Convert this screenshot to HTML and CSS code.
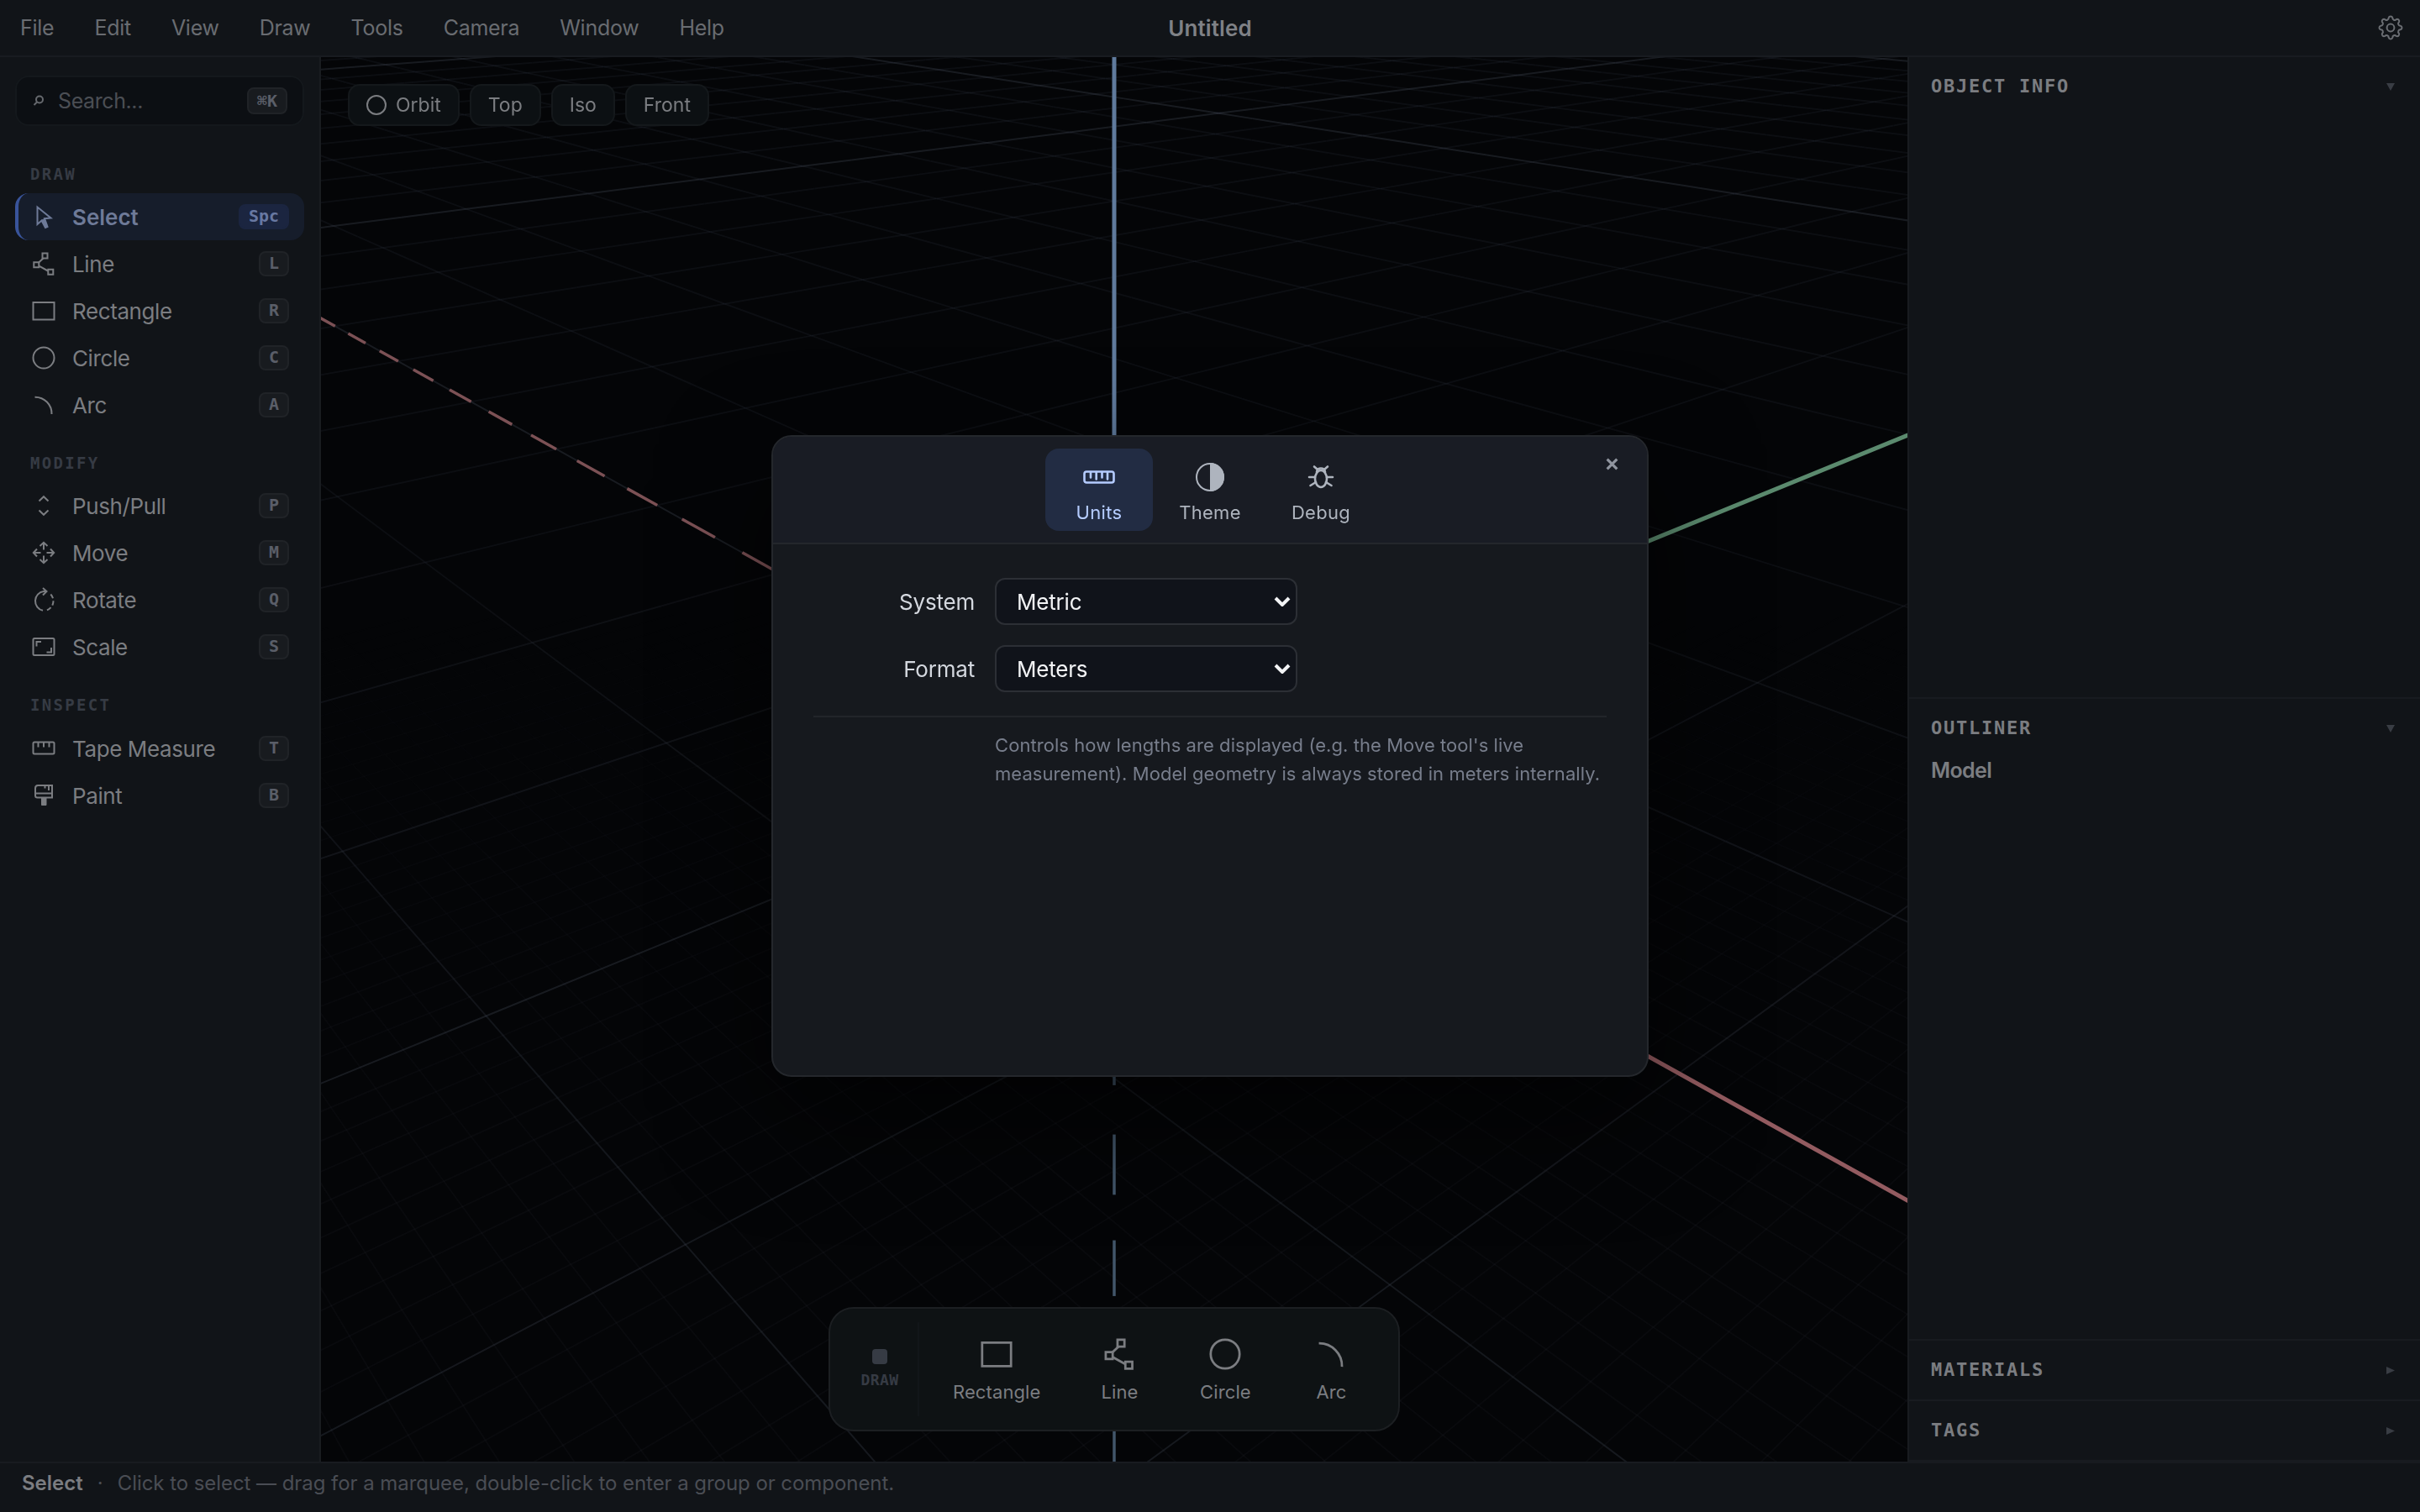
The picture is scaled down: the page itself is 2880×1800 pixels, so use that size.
FILE: index.html
```html
<!DOCTYPE html>
<html lang="en">
  <head>
    <meta charset="UTF-8" />
    <meta name="viewport" content="width=device-width, initial-scale=1.0" />
    <title>Untitled</title>
    <link rel="stylesheet" href="styles.css" />
  </head>
  <body>
    <!-- Shared icon shapes -->
    <svg class="sprite">
      <symbol id="i-line" viewBox="0 0 32 32">
        <path d="M15.5 9.5L9.5 15M10.5 18.7L21 24.5" />
        <path d="M14.5 3.5h6v6h-6zM4.3 14.3h6v6h-6zM21.3 22.7h6v6h-6z" />
      </symbol>
      <symbol id="i-rect" viewBox="0 0 32 32"><path d="M3.5 6h25v20.500h-25z" /></symbol>
      <symbol id="i-circle" viewBox="0 0 32 32"><circle cx="16" cy="16" r="12.500" /></symbol>
      <symbol id="i-arc" viewBox="0 0 32 32"><path d="M5.500 6.700A19.700 19.700 0 0 1 25.500 27" /></symbol>
    </svg>

    <div class="app">
      <header class="menubar">
        <nav class="menus">
          <span class="menu">File</span>
          <span class="menu">Edit</span>
          <span class="menu">View</span>
          <span class="menu">Draw</span>
          <span class="menu">Tools</span>
          <span class="menu">Camera</span>
          <span class="menu">Window</span>
          <span class="menu">Help</span>
        </nav>
        <div class="doc-title">Untitled</div>
        <div class="menubar-end">
          <svg class="gear" viewBox="-16 -16 32 32">
            <path d="M11.77-2.34A2.45 2.45 0 0 1 11.77 2.34A2.45 2.45 0 0 0 9.98 6.67A2.45 2.45 0 0 1 6.67 9.98A2.45 2.45 0 0 0 2.34 11.77A2.45 2.45 0 0 1-2.34 11.77A2.45 2.45 0 0 0-6.67 9.98A2.45 2.45 0 0 1-9.98 6.67A2.45 2.45 0 0 0-11.77 2.34A2.45 2.45 0 0 1-11.77-2.34A2.45 2.45 0 0 0-9.98-6.67A2.45 2.45 0 0 1-6.67-9.98A2.45 2.45 0 0 0-2.34-11.77A2.45 2.45 0 0 1 2.34-11.77A2.45 2.45 0 0 0 6.67-9.98A2.45 2.45 0 0 1 9.98-6.67A2.45 2.45 0 0 0 11.77-2.34Z" />
            <circle r="4.400" />
          </svg>
        </div>
      </header>

      <aside class="sidebar">
        <div class="search">
          <svg class="search-icon" viewBox="0 0 14 14"><circle cx="8" cy="5.500" r="4" /><path d="M5 8.500L1.500 12" /></svg>
          <span class="search-text">Search...</span>
          <kbd>⌘K</kbd>
        </div>

        <h2 class="group first">DRAW</h2>
        <div class="tool active">
          <svg class="icon" viewBox="0 0 32 32"><path d="M8.500 4.500V25L13.500 20.500L18 29L20.500 28L17 18.200L24.500 17.500Z" /><path class="solid" d="M14 20l4 9 2.500-1-3.500-9.500z" /></svg>
          <span>Select</span><kbd>Spc</kbd>
        </div>
        <div class="tool"><svg class="icon"><use href="#i-line" /></svg><span>Line</span><kbd>L</kbd></div>
        <div class="tool"><svg class="icon"><use href="#i-rect" /></svg><span>Rectangle</span><kbd>R</kbd></div>
        <div class="tool"><svg class="icon"><use href="#i-circle" /></svg><span>Circle</span><kbd>C</kbd></div>
        <div class="tool"><svg class="icon"><use href="#i-arc" /></svg><span>Arc</span><kbd>A</kbd></div>

        <h2 class="group">MODIFY</h2>
        <div class="tool">
          <svg class="icon" viewBox="0 0 32 32"><path d="M10.500 10.500L16 5.200l5.500 5.300M10.500 21.500l5.500 5.300 5.500-5.300" /></svg>
          <span>Push/Pull</span><kbd>P</kbd>
        </div>
        <div class="tool">
          <svg class="icon" viewBox="0 0 32 32"><path d="M16 12.500V4M11.500 8L16 3.800 20.500 8M16 19.500V28M11.500 24l4.500 4.200 4.500-4.200M12.500 16H4M8 11.500L3.800 16 8 20.500M19.500 16H28M24 11.500l4.200 4.500-4.200 4.500" /></svg>
          <span>Move</span><kbd>M</kbd>
        </div>
        <div class="tool">
          <svg class="icon" viewBox="0 0 32 32"><path d="M15 28.800A11.600 11.600 0 0 1 16 6h3.500M15 2l4.500 4-4.500 4.500" /><path d="M24.300 9.500a11.600 11.600 0 0 1-6 19.300" stroke-dasharray="5.500 3" /></svg>
          <span>Rotate</span><kbd>Q</kbd>
        </div>
        <div class="tool">
          <svg class="icon" viewBox="0 0 32 32"><rect x="3.500" y="6" width="25" height="20" rx="1.500" /><path d="M7.500 15.500v-5.500h5.500M19.500 22.500h5.500V17" /></svg>
          <span>Scale</span><kbd>S</kbd>
        </div>

        <h2 class="group">INSPECT</h2>
        <div class="tool">
          <svg class="icon" viewBox="0 0 32 32"><rect x="3.500" y="8.500" width="25" height="14" rx="1.500" /><path d="M9.500 8.500v6M16 8.500v6M22.500 8.500v6" /></svg>
          <span>Tape Measure</span><kbd>T</kbd>
        </div>
        <div class="tool">
          <svg class="icon" viewBox="0 0 32 32"><path d="M9 4h17v14.500H8.500q-2.500 0-2.500-2.500V7.500Q6 4 9 4zM6 13.500h20M17.500 4v3.500M22 4v6" /><path class="solid" d="M13.500 19h5.500v8.500h-5.500z" /></svg>
          <span>Paint</span><kbd>B</kbd>
        </div>
      </aside>

      <main class="viewport">
        <canvas id="scene" width="1888" height="1672"></canvas>
        <div class="views">
          <span class="view"><svg class="view-icon" viewBox="0 0 24 24"><circle cx="12" cy="12" r="11" /></svg>Orbit</span>
          <span class="view">Top</span>
          <span class="view">Iso</span>
          <span class="view">Front</span>
        </div>
        <div class="dock">
          <div class="dock-label"><i></i>DRAW</div>
          <div class="dock-item"><svg class="dock-icon"><use href="#i-rect" /></svg>Rectangle</div>
          <div class="dock-item"><svg class="dock-icon"><use href="#i-line" /></svg>Line</div>
          <div class="dock-item"><svg class="dock-icon"><use href="#i-circle" /></svg>Circle</div>
          <div class="dock-item"><svg class="dock-icon"><use href="#i-arc" /></svg>Arc</div>
        </div>
      </main>

      <aside class="inspector">
        <section class="panel open">
          <h3>OBJECT INFO<i class="caret down"></i></h3>
        </section>
        <section class="panel open">
          <h3>OUTLINER<i class="caret down"></i></h3>
          <div class="node">Model</div>
        </section>
        <section class="panel">
          <h3>MATERIALS<i class="caret"></i></h3>
        </section>
        <section class="panel">
          <h3>TAGS<i class="caret"></i></h3>
        </section>
      </aside>

      <footer class="status">
        <b>Select</b><span class="dot">·</span>
        <span class="hint">Click to select — drag for a marquee, double-click to enter a group or component.</span>
      </footer>
    </div>

    <!-- Settings dialog -->
    <div class="backdrop">
      <div class="modal">
        <div class="tabs">
          <div class="tab active">
            <svg viewBox="0 0 40 40"><rect x="2.500" y="13.500" width="35" height="13" rx="2.500" /><path d="M10 14v6.500M16.700 14v8.500M23.500 14v6.500M30 14v8.500" /></svg>
            Units
          </div>
          <div class="tab">
            <svg viewBox="0 0 40 40"><circle cx="20" cy="20" r="16" stroke-width="2" /><path class="fill" d="M20 3a17 17 0 0 1 0 34z" /></svg>
            Theme
          </div>
          <div class="tab">
            <svg viewBox="0 0 40 40"><ellipse cx="20" cy="22" rx="7" ry="10" /><path d="M15 14c0-6 10-6 10 0M15.500 10.500L12 7.500M24.500 10.500L28 7.500M13 20H6M27 20h7M14 26l-6.500 4M26 26l6.500 4" /></svg>
            Debug
          </div>
          <span class="close"><svg viewBox="0 0 16 16"><path d="M2.500 2.500l11 11M13.500 2.500l-11 11" /></svg></span>
        </div>
        <div class="modal-body">
          <div class="field">
            <label for="system">System</label>
            <div class="select" id="system">Metric<svg viewBox="0 0 20 12"><path d="M2 2l8 8 8-8" /></svg></div>
          </div>
          <div class="field">
            <label for="format">Format</label>
            <div class="select" id="format">Meters<svg viewBox="0 0 20 12"><path d="M2 2l8 8 8-8" /></svg></div>
          </div>
          <p class="help">Controls how lengths are displayed (e.g. the Move tool's live<br />measurement). Model geometry is always stored in meters internally.</p>
        </div>
      </div>
    </div>

    <script src="scene.js"></script>
  </body>
</html>
```
FILE: styles.css
```css
* {
  box-sizing: border-box;
}

body {
  margin: 0;
  width: 2880px;
  height: 1800px;
  overflow: hidden;
  background: #111418;
  color: #7b7d81;
  font-family: Inter, "Liberation Sans", sans-serif;
  font-size: 26px;
}

svg {
  fill: none;
  stroke: currentColor;
  stroke-width: 2;
  flex: none;
}

.solid {
  fill: currentColor;
  stroke-width: 1;
}

.sprite {
  display: none;
}

.app {
  display: grid;
  grid-template: 68px 1672px 60px / 382px 1888px 610px;
}

/* Menu bar */
.menubar {
  grid-column: 1 / -1;
  display: grid;
  grid-template-columns: 1fr auto 1fr;
  align-items: center;
  border-bottom: 2px solid #181b20;
}

.menus {
  display: flex;
  padding-left: 4px;
  gap: 8px;
}

.menu {
  padding: 0 20px;
  color: #696c71;
  font-size: 25px;
  letter-spacing: -0.27px;
}

.doc-title {
  font-weight: 600;
  letter-spacing: 0.1px;
  color: #7f8186;
}

.menubar-end {
  display: flex;
  justify-content: flex-end;
  padding-right: 19px;
}

.gear {
  width: 32px;
  height: 32px;
  color: #6b6e73;
}

/* Tool list */
.sidebar {
  padding: 22px 18px 0;
  border-right: 2px solid #191c20;
}

.search {
  display: flex;
  align-items: center;
  height: 60px;
  padding: 0 18px 0 19px;
  border: 2px solid #14181c;
  border-radius: 16px;
  background: #0c0f13;
  color: #4b4e54;
}

.search-text {
  font-size: 25px;
  letter-spacing: -0.4px;
}

.search-icon {
  width: 14px;
  height: 14px;
  margin-right: 16px;
  color: #66696e;
}

kbd {
  display: flex;
  justify-content: center;
  align-items: center;
  height: 30px;
  margin-left: auto;
  padding: 0 10px 3px;
  border: 2px solid #202327;
  border-radius: 8px;
  background: #181b1f;
  color: #5a5e68;
  font: bold 20px "DejaVu Sans Mono", monospace;
}

.search kbd {
  height: 32px;
  padding: 0 10px;
}

.group {
  height: 64px;
  margin: 0;
  padding: 31px 0 0 18px;
  color: #363b44;
  font: bold 19px/20px "DejaVu Sans Mono", monospace;
  letter-spacing: 2.3px;
}

.group.first {
  margin-top: 16px;
}

.group:last-of-type {
  height: 65px;
}

.tool {
  display: flex;
  align-items: center;
  height: 56px;
  padding: 0 18px;
  letter-spacing: -0.4px;
}

.tool kbd {
  letter-spacing: 0;
}

.icon {
  width: 32px;
  height: 32px;
  margin-right: 18px;
}

.tool.active {
  padding-left: 14px;
  border-left: 4px solid #39549a;
  border-radius: 16px;
  background: #161d2b;
  color: #6e7a98;
  font-weight: 600;
  letter-spacing: 0;
}

.tool.active kbd {
  border-color: #1b2540;
  background: #1b2540;
  color: #6878a2;
}

/* 3D viewport */
.viewport {
  position: relative;
  display: flex;
  flex-direction: column;
  justify-content: space-between;
  padding: 32px 32px 36px;
  background: #040507;
}

#scene {
  position: absolute;
  top: 0;
  left: 0;
}

.views {
  position: relative;
  display: flex;
  gap: 12px;
}

.view {
  display: flex;
  align-items: center;
  height: 50px;
  padding: 0 20px;
  border: 2px solid #14181b;
  border-radius: 14px;
  background: #0c1013;
  font-size: 23px;
}

.view-icon {
  width: 24px;
  height: 24px;
  margin-right: 11px;
}

.dock {
  position: relative;
  align-self: center;
  display: flex;
  align-items: center;
  gap: 14px;
  width: 680px;
  height: 148px;
  padding: 16px 22px;
  border: 2px solid #1c1f22;
  border-radius: 30px;
  background: #0e1214;
}

.dock-label {
  display: flex;
  flex-direction: column;
  align-items: center;
  justify-content: center;
  gap: 8px;
  width: 84px;
  height: 112px;
  padding-right: 8px;
  margin-right: 2px;
  border-right: 2px solid #121619;
  color: #363b44;
  font: bold 18px/22px "DejaVu Sans Mono", monospace;
  letter-spacing: 0.4px;
}

.dock-label i {
  width: 18px;
  height: 18px;
  border-radius: 4px;
  background: #363b44;
}

.dock-item {
  display: flex;
  flex-direction: column;
  align-items: center;
  gap: 9px;
  min-width: 112px;
  padding: 0 24px;
  font-size: 22px;
  letter-spacing: 0.1px;
  line-height: 28px;
}

.dock-icon {
  width: 44px;
  height: 44px;
}

/* Right side panels */
.inspector {
  display: flex;
  flex-direction: column;
  border-left: 2px solid #191c20;
}

.panel {
  height: 72px;
  border-bottom: 2px solid #181b20;
}

.panel.open {
  flex: 1;
}

.panel h3 {
  display: flex;
  align-items: center;
  justify-content: space-between;
  height: 68px;
  margin: 0;
  padding: 0 30px 0 26px;
  font: bold 22px "DejaVu Sans Mono", monospace;
  letter-spacing: 1.76px;
}

.caret {
  width: 10px;
  height: 9px;
  margin-top: 3px;
  background: #393d44;
  clip-path: polygon(0 0, 100% 50%, 0 100%);
}

.caret.down {
  clip-path: polygon(0 0, 100% 0, 50% 100%);
}

.node {
  padding-left: 26px;
  line-height: 34px;
  font-size: 25px;
  font-weight: 600;
  letter-spacing: -0.6px;
}

/* Status bar */
.status {
  grid-column: 1 / -1;
  display: flex;
  align-items: center;
  padding: 0 26px 11px;
  border-top: 2px solid #181b20;
  color: #4a4d54;
  font-size: 24px;
}

.status b {
  font-weight: 600;
  color: #7b7d81;
}

.dot {
  width: 41px;
  text-align: center;
}

.hint {
  letter-spacing: -0.06px;
}

/* Settings dialog */
.backdrop {
  position: absolute;
  inset: 0;
  display: flex;
  align-items: center;
  justify-content: center;
}

.modal {
  width: 1044px;
  height: 764px;
  overflow: hidden;
  border: 2px solid #24272c;
  border-radius: 24px;
  background: #16191e;
  box-shadow: 0 48px 128px rgba(0, 0, 0, 0.6);
}

.tabs {
  position: relative;
  display: flex;
  justify-content: center;
  gap: 4px;
  height: 128px;
  padding-top: 14px;
  border-bottom: 2px solid #24272c;
  background: #191c24;
}

.tab {
  display: flex;
  flex-direction: column;
  align-items: center;
  gap: 8px;
  width: 128px;
  height: 98px;
  padding-top: 14px;
  border-radius: 16px;
  color: #aeb4be;
  font-size: 22px;
  letter-spacing: 0.3px;
  line-height: 28px;
}

.tab svg {
  width: 40px;
  height: 40px;
  stroke-width: 2.6;
  stroke-linecap: round;
}

.fill {
  fill: currentColor;
  stroke: none;
}

.tab.active {
  background: #222c43;
  color: #b5ccff;
}

.close {
  position: absolute;
  top: 16px;
  right: 33px;
  color: #90959f;
}

.close svg {
  width: 17px;
  height: 17px;
  stroke-width: 3;
}

.modal-body {
  padding: 40px 48px;
}

.field {
  display: flex;
  align-items: center;
  gap: 24px;
  margin-bottom: 24px;
}

.field label {
  width: 192px;
  text-align: right;
  letter-spacing: -0.2px;
  color: #d4d8df;
}

.select {
  display: flex;
  align-items: center;
  justify-content: space-between;
  width: 360px;
  height: 56px;
  padding: 0 6px 0 24px;
  border: 2px solid #2c2f35;
  border-radius: 12px;
  background: #10131a;
  letter-spacing: -0.2px;
  color: #f2f3f5;
}

.select svg {
  width: 20px;
  height: 12px;
  stroke-width: 4;
}

.help {
  margin: 28px 0 0;
  padding: 16px 0 0 216px;
  border-top: 2px solid #22252a;
  color: #777d8b;
  font-size: 22px;
  letter-spacing: 0.06px;
  line-height: 34px;
  white-space: nowrap;
}
```
FILE: scene.js
```js
const canvas = document.getElementById('scene');
const ctx = canvas.getContext('2d');
const W = canvas.width;
const H = canvas.height;

// Camera at (7, -6, 5) looking at the origin, 45 degree vertical fov
const eye = [7, -6, 5];
const dist = Math.hypot(...eye);
const focal = H / 2 / Math.tan(Math.PI / 8);
const back = eye.map((v) => v / dist);
const flat = Math.hypot(eye[0], eye[1]);
const right = [-eye[1] / flat, eye[0] / flat, 0];
const up = [
  back[1] * right[2] - back[2] * right[1],
  back[2] * right[0] - back[0] * right[2],
  back[0] * right[1] - back[1] * right[0],
];

const dot = (a, b) => a[0] * b[0] + a[1] * b[1] + a[2] * b[2];

function project(p) {
  const depth = dist - dot(p, back);
  return {
    x: W / 2 + (focal * dot(p, right)) / depth,
    y: H / 2 - (focal * dot(p, up)) / depth,
    depth,
  };
}

function segment(a, b, color, width) {
  const p = project(a);
  const q = project(b);
  if (p.depth < 0.5 || q.depth < 0.5) return;
  ctx.strokeStyle = color;
  ctx.lineWidth = width;
  ctx.beginPath();
  ctx.moveTo(p.x, p.y);
  ctx.lineTo(q.x, q.y);
  ctx.stroke();
}

// Grid lines are cut in pieces so each piece can fade with distance
function grid(step, extent, piece, skip, width, alphaAt) {
  const n = Math.round(extent / step);
  for (let i = -n; i <= n; i++) {
    if (skip && i % skip === 0) continue;
    const c = i * step;
    for (let t = -extent; t < extent; t += piece) {
      [[[c, t, 0], [c, t + piece, 0]], [[t, c, 0], [t + piece, c, 0]]].forEach(([a, b]) => {
        const alpha = alphaAt(project(a).depth);
        if (alpha > 0.004) segment(a, b, `rgba(130, 140, 165, ${alpha})`, width);
      });
    }
  }
}

const clamp = (v) => Math.max(0, Math.min(1, v));

grid(0.2, 12, 0.5, 10, 2, (d) => 0.045 * clamp((13 - d) / 6));
grid(2, 80, 1, 10, 2, (d) => 0.07 + 0.08 * clamp((13 - d) / 7));
grid(20, 80, 1, 0, 2, () => 0.16);

// Axes: solid on the positive side, dashed on the negative one
segment([0, 0, 0], [6, 0, 0], '#935b60', 5);
segment([0, 0, 0], [0, 30, 0], '#5b8a6e', 5);
segment([0, 0, 0], [0, 0, 8], '#5f7a9c', 5);
for (let i = 0; i < 20; i++) {
  segment([-i, 0, 0], [-i - 0.56, 0, 0], '#7c5155', 3.5);
  segment([0, 0, -i], [0, 0, -i - 0.56], '#42566a', 3.5);
}
```
